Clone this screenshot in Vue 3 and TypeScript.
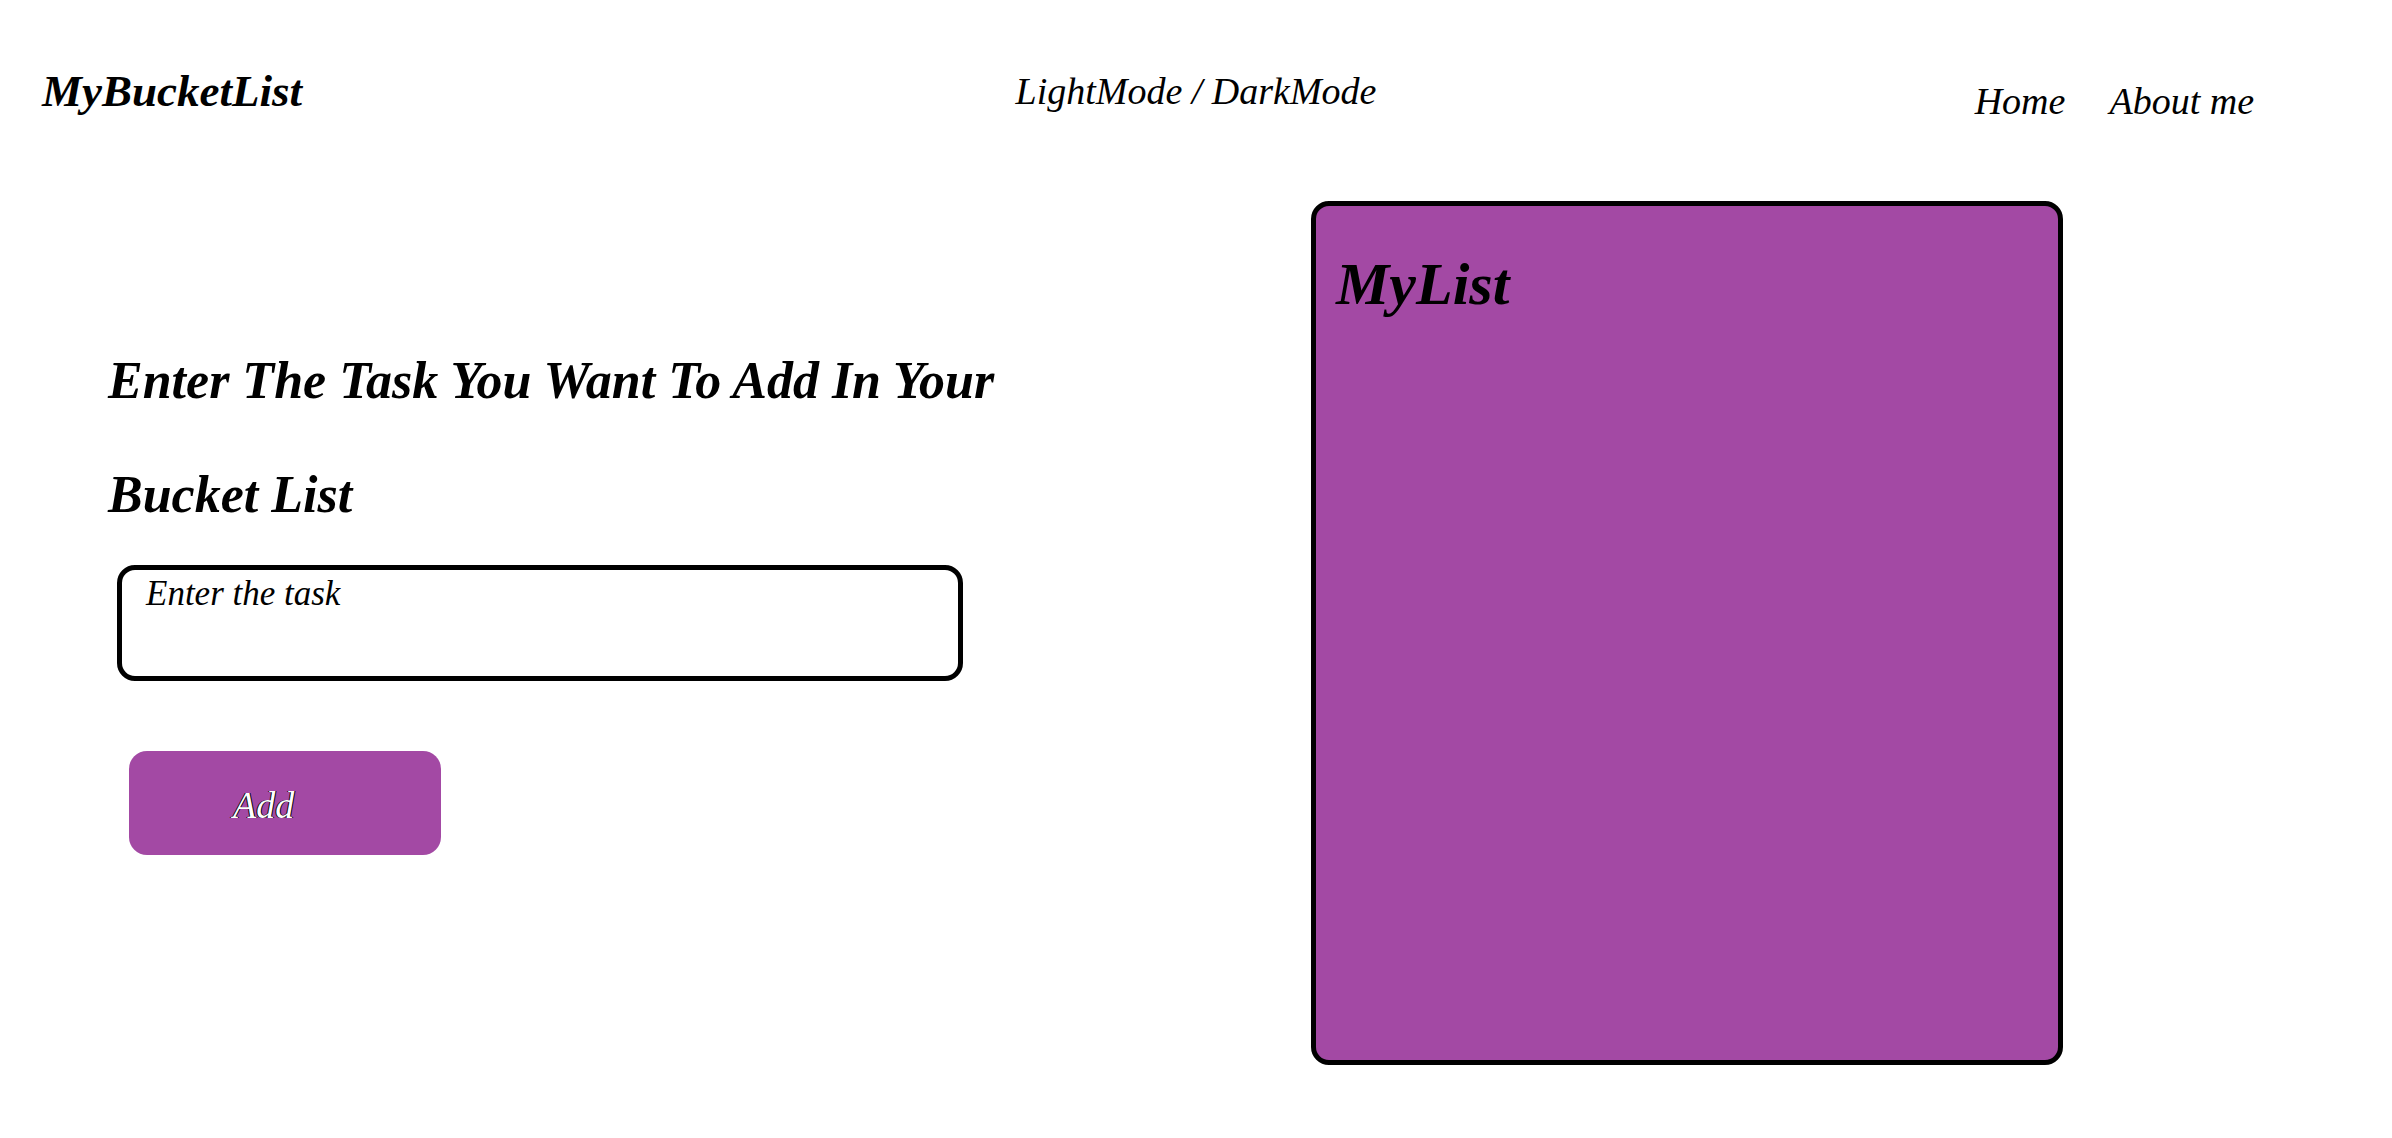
<script setup lang="ts">
import { ref } from 'vue'

const task = ref('')
const items = ref<string[]>([])

function addTask(): void {
  const text = task.value.trim()
  if (!text) return
  items.value.push(text)
  task.value = ''
}
</script>

<template>
  <div class="page">
    <header class="header">
      <h1 class="brand">MyBucketList</h1>
      <button class="mode" type="button">LightMode / DarkMode</button>
      <nav class="nav">
        <a href="#home">Home</a>
        <a href="#about">About me</a>
      </nav>
    </header>

    <main class="main">
      <form class="form" @submit.prevent="addTask">
        <label class="title" for="task">Enter The Task You Want To Add In Your Bucket List</label>
        <textarea id="task" v-model="task" class="field" placeholder="Enter the task"></textarea>
        <button class="add" type="submit">Add</button>
      </form>

      <section class="list">
        <h2 class="list-title">MyList</h2>
        <ul v-if="items.length" class="items">
          <li v-for="(item, i) in items" :key="i">{{ item }}</li>
        </ul>
      </section>
    </main>
  </div>
</template>

<style>
body {
  margin: 0;
  background: #fff;
}
</style>

<style scoped>
.page {
  box-sizing: border-box;
  min-height: 100vh;
  padding-top: 61px;
  color: #000;
  font-family: Gabriola, "Liberation Serif", serif;
  font-size: 38px;
  font-style: italic;
  line-height: 60px;
}

.header {
  display: grid;
  grid-template-columns: 1fr auto 1fr;
  align-items: start;
}

.brand {
  margin: 0;
  padding-left: 42px;
  font-size: 45px;
  font-weight: 700;
}

.mode {
  padding: 0;
  border: 0;
  background: none;
  color: inherit;
  font: inherit;
  cursor: pointer;
}

.nav {
  display: flex;
  justify-content: flex-end;
  gap: 44px;
  padding: 10px 138px 0 0;
}

.nav a {
  color: inherit;
  text-decoration: none;
}

.main {
  display: grid;
  grid-template-columns: 1311fr 752fr;
  align-items: start;
  margin-top: 70px;
  padding-right: 329px;
}

.form {
  display: flex;
  flex-direction: column;
  align-items: flex-start;
  padding: 123px 40px 0 108px;
}

.title {
  max-width: 940px;
  font-size: 52px;
  font-weight: 700;
  line-height: 114px;
}

.field {
  box-sizing: border-box;
  width: 100%;
  max-width: 846px;
  height: 116px;
  margin: 13px 0 0 9px;
  padding: 2px 24px 0;
  border: 5px solid #000;
  border-radius: 18px;
  outline: 0;
  background: #fff;
  color: #000;
  font: inherit;
  font-size: 35px;
  line-height: 44px;
  resize: none;
}

.field::placeholder {
  color: #000;
  opacity: 1;
}

.add {
  width: 312px;
  margin: 70px 0 0 21px;
  padding: 32px 104px 28px;
  border: 0;
  border-radius: 18px;
  background: #a349a4;
  color: #fff;
  font: inherit;
  font-size: 38px;
  line-height: 44px;
  text-align: left;
  text-shadow: -1px 0 #000, 1px 0 #000;
  cursor: pointer;
}

.list {
  box-sizing: border-box;
  min-height: 864px;
  padding: 38px 20px;
  border: 5px solid #000;
  border-radius: 18px;
  background: #a349a4;
}

.list-title {
  margin: 0;
  font-size: 60px;
  font-weight: 700;
  line-height: 80px;
}

.items {
  margin: 0;
  padding-left: 44px;
}
</style>
